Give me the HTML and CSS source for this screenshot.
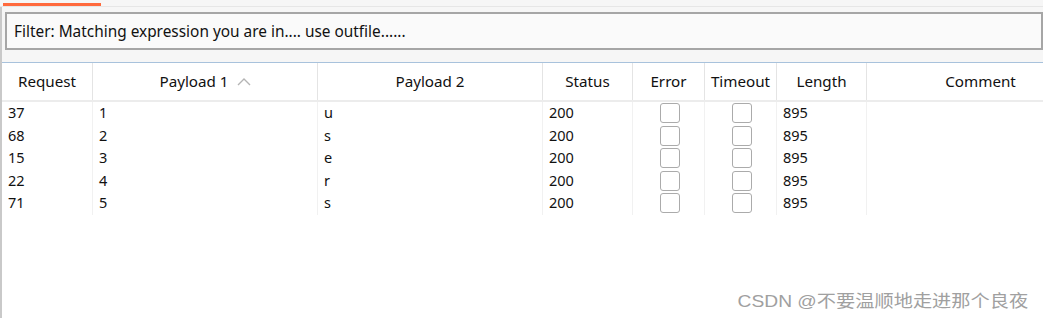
FILE: index.html
```html
<!DOCTYPE html>
<html lang="zh">
<head>
  <meta charset="UTF-8" />
  <meta name="viewport" content="width=device-width, initial-scale=1.0"/>
  <title>Intruder results</title>
  <link rel="stylesheet" href="styles.css">
</head>
<body>
  <div class="top">
    <div class="tab-line"></div>
  </div>
  <div class="panel">
    <div class="filter-wrap">
      <div class="filter">Filter: Matching expression you are in.... use outfile......</div>
    </div>
    <div class="results">
      <div class="row head">
        <div class="cell">Request</div>
        <div class="cell">Payload 1
          <svg class="sort" width="14" height="9" viewBox="0 0 14 9"><path d="M1 8 L7 2 L13 8" fill="none" stroke="#b4b4b4" stroke-width="1.4"/></svg>
        </div>
        <div class="cell">Payload 2</div>
        <div class="cell">Status</div>
        <div class="cell">Error</div>
        <div class="cell">Timeout</div>
        <div class="cell">Length</div>
        <div class="cell">Comment</div>
      </div>
      <div class="row">
        <div class="cell">37</div><div class="cell">1</div><div class="cell">u</div><div class="cell">200</div>
        <div class="cell box"><span class="check"></span></div><div class="cell box"><span class="check"></span></div>
        <div class="cell">895</div><div class="cell"></div>
      </div>
      <div class="row">
        <div class="cell">68</div><div class="cell">2</div><div class="cell">s</div><div class="cell">200</div>
        <div class="cell box"><span class="check"></span></div><div class="cell box"><span class="check"></span></div>
        <div class="cell">895</div><div class="cell"></div>
      </div>
      <div class="row">
        <div class="cell">15</div><div class="cell">3</div><div class="cell">e</div><div class="cell">200</div>
        <div class="cell box"><span class="check"></span></div><div class="cell box"><span class="check"></span></div>
        <div class="cell">895</div><div class="cell"></div>
      </div>
      <div class="row">
        <div class="cell">22</div><div class="cell">4</div><div class="cell">r</div><div class="cell">200</div>
        <div class="cell box"><span class="check"></span></div><div class="cell box"><span class="check"></span></div>
        <div class="cell">895</div><div class="cell"></div>
      </div>
      <div class="row">
        <div class="cell">71</div><div class="cell">5</div><div class="cell">s</div><div class="cell">200</div>
        <div class="cell box"><span class="check"></span></div><div class="cell box"><span class="check"></span></div>
        <div class="cell">895</div><div class="cell"></div>
      </div>
    </div>
    <div class="watermark">CSDN @不要温顺地走进那个良夜</div>
  </div>
</body>
</html>
```

FILE: styles.css
```css
body {
  margin: 0;
  padding: 0;
  background-color: #fff;
  font-family: "Noto Sans", "Noto Sans CJK SC", sans-serif;
  color: #111;
  overflow: hidden;
}
.top {
  height: 7px;
  padding: 3px 0 0 3px;
  box-sizing: border-box;
  background-color: #f6f6f6;
  border-bottom: 1px solid #e6e6e6;
}
.tab-line {
  width: 98px;
  height: 3px;
  background-color: #ff6a3d;
}
.panel {
  border-left: 2px solid #c9c9c9;
  height: 311px;
  position: relative;
  overflow: hidden;
}
.filter-wrap {
  background-color: #f6f6f6;
  padding: 5px 0 12px 3px;
}
.filter {
  height: 34px;
  border: 2px solid #a6a6a6;
  background-color: #fafafa;
  font-size: 15.4px;
  line-height: 35px;
  padding-left: 7px;
  color: #111;
}
.results {
  border-top: 1px solid #a8c2dc;
}
.row {
  display: grid;
  grid-template-columns: 91px 225px 225px 90px 72px 72px 90px 228px;
  height: 22.5px;
  font-size: 14.5px;
  line-height: 20px;
}
.row .cell {
  border-right: 1px solid #f1f1f1;
  padding-left: 6px;
  white-space: nowrap;
}
.row.head {
  height: 37px;
  border-bottom: 2px solid #ececec;
  font-size: 15.2px;
  line-height: 37px;
}
.row.head .cell {
  border-right: 1px solid #e4e4e4;
  padding-left: 0;
  text-align: center;
}
.sort {
  margin-left: 4px;
  vertical-align: 1px;
}
.row .box {
  padding-left: 0;
  display: flex;
  justify-content: center;
  align-items: center;
}
.check {
  width: 18px;
  height: 18px;
  border: 1px solid #ababab;
  border-radius: 3px;
  margin-left: 3px;
}
.watermark {
  position: absolute;
  right: 15px;
  bottom: 6px;
  font-family: "Liberation Sans", "Noto Sans CJK SC", sans-serif;
  font-size: 17px;
  color: #a0a0a0;
  transform: scaleX(1.13);
  transform-origin: right center;
}
```
